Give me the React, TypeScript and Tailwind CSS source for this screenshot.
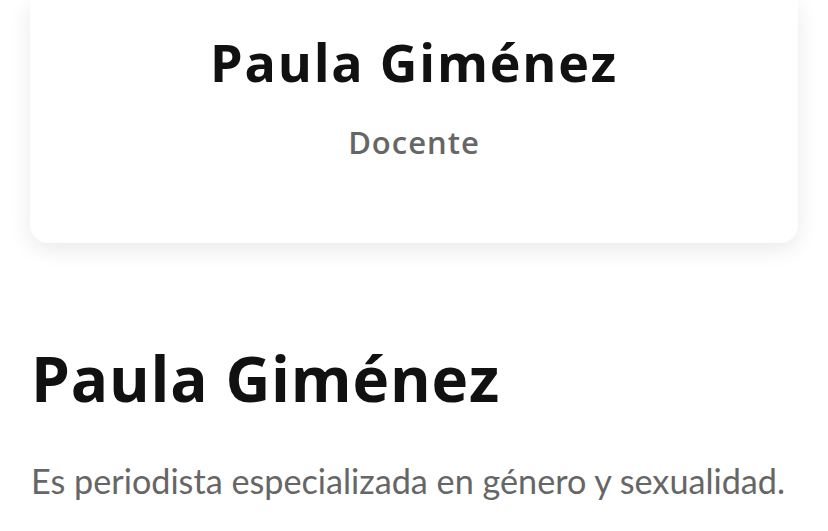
export default function App() {
  return (
    <div className="min-h-screen bg-white font-['Lato',sans-serif]">
      {/* profile card, top cut off by the scroll */}
      <div className="mx-[30px] rounded-b-[18px] bg-white pt-[30px] pb-[83px] text-center shadow-[0_6px_22px_rgba(0,0,0,0.09)]">
        <h1 className="font-['Open_Sans',sans-serif] text-[52px] leading-[64px] font-bold tracking-[1.8px] text-[#111]">Paula Giménez</h1>
        <p className="mt-[30px] font-['Open_Sans',sans-serif] text-[31px] leading-[36px] font-semibold tracking-[1px] text-[#666]">Docente</p>
      </div>

      <div className="px-[31px]">
        <h2 className="mt-[98px] font-['Open_Sans',sans-serif] text-[62px] leading-[74px] font-bold tracking-[0.8px] text-[#111]">Paula Giménez</h2>
        <p className="mt-[44px] text-[34.2px] leading-[44px] text-[#666]">
          Es periodista especializada en género y sexualidad.
        </p>
      </div>
    </div>
  );
}
